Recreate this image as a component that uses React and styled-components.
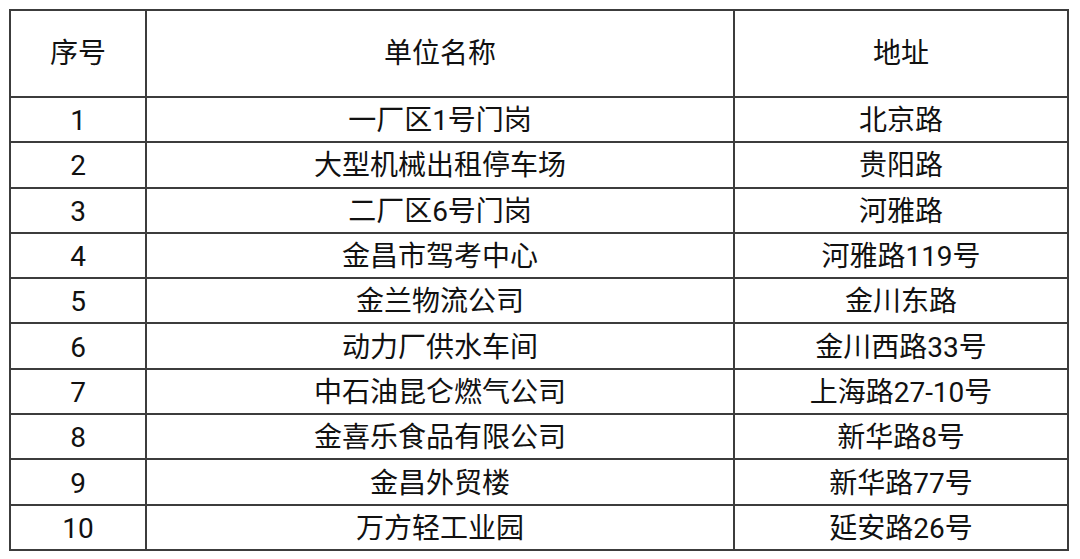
import React from 'react'
import styled, { createGlobalStyle } from 'styled-components'

const GlobalStyle = createGlobalStyle`
  html, body {
    margin: 0;
    padding: 0;
    background: #ffffff;
    overflow: hidden;
  }
  body {
    font-family: Roboto, "Noto Sans CJK SC", sans-serif;
    color: #111111;
  }
`

const Page = styled.div`
  padding: 9px 0 0 9px;
  height: 559px;
  box-sizing: border-box;
  background: #ffffff;
`

const Table = styled.table`
  border-collapse: collapse;
  width: 1060px;
  table-layout: fixed;
  font-size: 28px;
  line-height: 28px;

  td, th {
    border: 2px solid #3c3c3c;
    text-align: center;
    vertical-align: middle;
    padding: 0;
    font-weight: 400;
  }
`

const NumCol = styled.col`
  width: 136px;
`

const NameCol = styled.col`
  width: 588px;
`

const HeadCell = styled.th`
  height: 85px;
`

const Cell = styled.td`
  height: 40.3px;
  padding-top: 3px !important;
`

const rows = [
  ['1', '一厂区1号门岗', '北京路'],
  ['2', '大型机械出租停车场', '贵阳路'],
  ['3', '二厂区6号门岗', '河雅路'],
  ['4', '金昌市驾考中心', '河雅路119号'],
  ['5', '金兰物流公司', '金川东路'],
  ['6', '动力厂供水车间', '金川西路33号'],
  ['7', '中石油昆仑燃气公司', '上海路27-10号'],
  ['8', '金喜乐食品有限公司', '新华路8号'],
  ['9', '金昌外贸楼', '新华路77号'],
  ['10', '万方轻工业园', '延安路26号'],
]

export default function App() {
  return (
    <Page>
      <GlobalStyle />
      <Table>
        <colgroup>
          <NumCol />
          <NameCol />
          <col />
        </colgroup>
        <thead>
          <tr>
            <HeadCell>序号</HeadCell>
            <HeadCell>单位名称</HeadCell>
            <HeadCell>地址</HeadCell>
          </tr>
        </thead>
        <tbody>
          {rows.map((row) => (
            <tr key={row[0]}>
              {row.map((text, i) => (
                <Cell key={i}>{text}</Cell>
              ))}
            </tr>
          ))}
        </tbody>
      </Table>
    </Page>
  )
}
